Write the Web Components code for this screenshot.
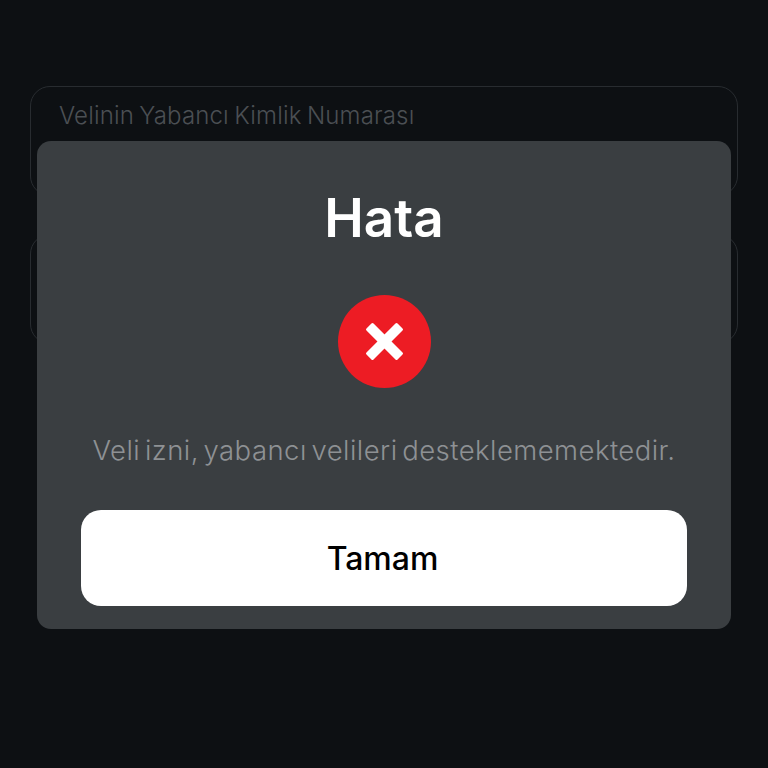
<!DOCTYPE html>
<html lang="tr">
<head>
<meta charset="utf-8">
<title>Hata</title>
<style>
  html, body { margin: 0; height: 100%; background: #0d1013; }
  body { font-family: "Inter", "Noto Sans", sans-serif; }
</style>
</head>
<body>
<form-page>
  <form-field label="Velinin Yabancı Kimlik Numarası"></form-field>
  <form-field></form-field>
  <error-dialog slot="dialog" heading="Hata" action="Tamam">Veli izni, yabancı velileri desteklememektedir.</error-dialog>
</form-page>

<script>
class FormPage extends HTMLElement {
  connectedCallback() {
    this.attachShadow({ mode: 'open' });
    this.shadowRoot.innerHTML = `
      <style>
        :host {
          display: block;
          position: relative;
          width: 768px;
          height: 768px;
          box-sizing: border-box;
          padding: 86px 30px 0;
          background: #0d1013;
          overflow: hidden;
        }
        .fields {
          display: flex;
          flex-direction: column;
          gap: 38px;
        }
      </style>
      <div class="fields"><slot></slot></div>
      <slot name="dialog"></slot>
    `;
  }
}

class FormField extends HTMLElement {
  connectedCallback() {
    this.attachShadow({ mode: 'open' });
    this.shadowRoot.innerHTML = `
      <style>
        :host {
          display: block;
          box-sizing: border-box;
          height: 110px;
          padding: 14px 28px;
          border: 1.5px solid #282c30;
          border-radius: 20px;
        }
        .label {
          font-size: 24px;
          line-height: 30px;
          font-weight: 300;
          letter-spacing: .15px;
          word-spacing: -1.5px;
          color: #4b4f53;
        }
      </style>
      <div class="label">${this.getAttribute('label') || ''}</div>
    `;
  }
}

class ErrorDialog extends HTMLElement {
  connectedCallback() {
    this.attachShadow({ mode: 'open' });
    this.shadowRoot.innerHTML = `
      <style>
        :host {
          position: absolute;
          left: 37px;
          top: 141px;
          width: 694px;
          height: 488px;
          box-sizing: border-box;
          padding: 0 44px 23px;
          display: flex;
          flex-direction: column;
          align-items: center;
          background: #3a3e41;
          border-radius: 14px;
        }
        h2 {
          margin: 44px 0 0;
          font-size: 53px;
          line-height: 66px;
          font-weight: 600;
          color: #ffffff;
        }
        svg {
          display: block;
          margin-top: 44px;
          flex: none;
        }
        p {
          margin: 44px 0 0;
          font-size: 27.5px;
          line-height: 36px;
          font-weight: 300;
          letter-spacing: .45px;
          word-spacing: -3.5px;
          color: #8e9194;
          white-space: nowrap;
        }
        button {
          margin-top: auto;
          width: 606px;
          height: 96px;
          border: 0;
          border-radius: 20px;
          padding: 0 3px 0 0;
          background: #ffffff;
          color: #000000;
          font: 500 32px "Inter", "Noto Sans", sans-serif;
        }
      </style>
      <h2>${this.getAttribute('heading')}</h2>
      <svg width="93" height="93" viewBox="0 0 93 93" aria-hidden="true">
        <circle cx="46.5" cy="46.5" r="46.5" fill="#ed1c24"/>
        <g fill="#fff" transform="translate(46.5 46.5) rotate(45)">
          <rect x="-22" y="-5" width="44" height="10" rx="1.5"/>
          <rect x="-5" y="-22" width="10" height="44" rx="1.5"/>
        </g>
      </svg>
      <p><slot></slot></p>
      <button type="button">${this.getAttribute('action')}</button>
    `;
  }
}

customElements.define('form-page', FormPage);
customElements.define('form-field', FormField);
customElements.define('error-dialog', ErrorDialog);
</script>
</body>
</html>
